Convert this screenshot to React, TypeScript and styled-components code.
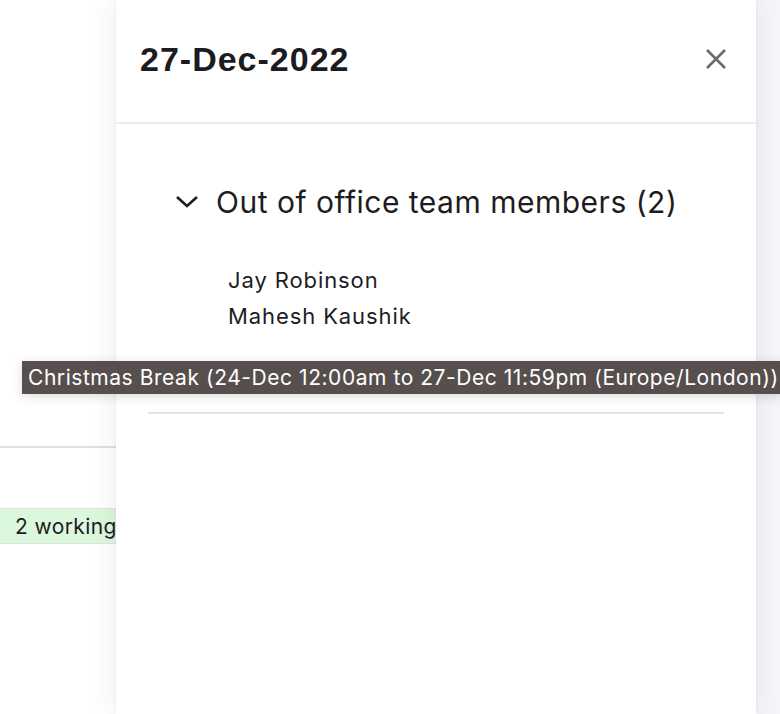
import styled, { createGlobalStyle } from "styled-components";

const GlobalStyle = createGlobalStyle`
  html, body {
    margin: 0;
    padding: 0;
    background: #ffffff;
  }
  body {
    font-family: Inter, "Liberation Sans", sans-serif;
    color: #1d1d1f;
  }
`;

const Screen = styled.div`
  position: relative;
  display: flex;
  width: 780px;
  height: 714px;
  overflow: hidden;
`;

const Backdrop = styled.div`
  display: flex;
  flex-direction: column;
  width: 116px;
  flex-shrink: 0;
  padding-top: 446px;
  background: #ffffff;
`;

const BackdropRule = styled.div`
  height: 2px;
  background: #dcdfe4;
`;

const WorkingChip = styled.div`
  margin-top: 60px;
  width: 140px;
  height: 36px;
  display: flex;
  align-items: center;
  padding-left: 15px;
  box-sizing: border-box;
  background: #dcf8dc;
  border: 1px solid #e2e4e2;
  border-left: none;
  font-size: 21px;
  letter-spacing: 0.4px;
  white-space: nowrap;
  color: #1d1d1f;
`;

const Panel = styled.div`
  position: relative;
  z-index: 1;
  display: flex;
  flex-direction: column;
  width: 640px;
  flex-shrink: 0;
  background: #ffffff;
  box-shadow: 0 0 28px rgba(30, 40, 80, 0.09), 0 0 3px rgba(30, 40, 80, 0.06);
`;

const Header = styled.div`
  display: flex;
  align-items: center;
  justify-content: space-between;
  height: 124px;
  padding: 0 28px 4px 24px;
  box-sizing: border-box;
  border-bottom: 2px solid #e9ecf1;
`;

const Title = styled.h1`
  margin: 0;
  font-family: "Liberation Sans", Arial, sans-serif;
  font-size: 34px;
  letter-spacing: 1px;
  font-weight: 700;
  color: #1c1c1e;
`;

const CloseButton = styled.button`
  display: flex;
  padding: 0;
  border: none;
  background: none;
  color: #6b6b6e;
`;

const Body = styled.div`
  display: flex;
  flex-direction: column;
  padding: 60px 32px 0 32px;
`;

const SectionToggle = styled.div`
  display: flex;
  align-items: center;
  gap: 17px;
  padding-left: 27px;
  font-size: 30px;
  letter-spacing: 0.5px;
  color: #1d1d1f;
`;

const MemberList = styled.ul`
  list-style: none;
  margin: 0;
  padding: 42px 0 0 80px;
`;

const Member = styled.li`
  font-size: 22px;
  letter-spacing: 0.9px;
  line-height: 36px;
  color: #1d1d1f;
`;

const Divider = styled.div`
  margin-top: 78px;
  height: 2px;
  background: #e4e4e6;
`;

const SideStrip = styled.div`
  flex: 1;
  background: #f5f6f9;
`;

const Tooltip = styled.div`
  position: absolute;
  z-index: 2;
  left: 22px;
  top: 361px;
  height: 33px;
  display: flex;
  align-items: center;
  padding: 0 6px;
  background: #574f4d;
  color: #ffffff;
  font-size: 21px;
  letter-spacing: 0.55px;
  white-space: nowrap;
  box-shadow: 0 2px 10px rgba(0, 0, 0, 0.15);
`;

const members = ["Jay Robinson", "Mahesh Kaushik"];

export default function App() {
  return (
    <>
      <GlobalStyle />
      <Screen>
        <Backdrop>
          <BackdropRule />
          <WorkingChip>2 working</WorkingChip>
        </Backdrop>
        <Panel>
          <Header>
            <Title>27-Dec-2022</Title>
            <CloseButton aria-label="Close">
              <svg width="24" height="24" viewBox="0 0 24 24">
                <path
                  d="M3 3 L21 21 M21 3 L3 21"
                  stroke="currentColor"
                  strokeWidth="2.6"
                  fill="none"
                />
              </svg>
            </CloseButton>
          </Header>
          <Body>
            <SectionToggle>
              <svg width="24" height="14" viewBox="0 0 24 14">
                <path
                  d="M2 2 L12 11 L22 2"
                  stroke="#1d1d1f"
                  strokeWidth="2.6"
                  fill="none"
                />
              </svg>
              Out of office team members (2)
            </SectionToggle>
            <MemberList>
              {members.map((m) => (
                <Member key={m}>{m}</Member>
              ))}
            </MemberList>
            <Divider />
          </Body>
        </Panel>
        <SideStrip />
        <Tooltip>
          Christmas Break (24-Dec 12:00am to 27-Dec 11:59pm (Europe/London))
        </Tooltip>
      </Screen>
    </>
  );
}
